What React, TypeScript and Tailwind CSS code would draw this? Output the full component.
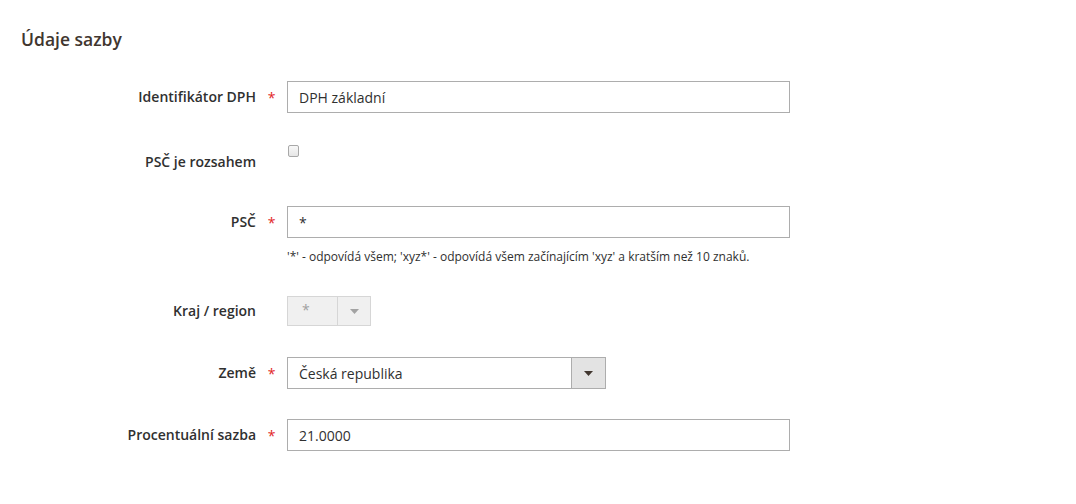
import React from "react";

const Caret = ({ color }: { color: string }) => (
  <svg width="9" height="5" viewBox="0 0 9 5" aria-hidden>
    <path d="M0 0 H9 L4.5 5 Z" fill={color} />
  </svg>
);

const Label = ({ text, required }: { text: string; required?: boolean }) => (
  <div className="flex w-[287px] shrink-0 items-center justify-end">
    <span className="text-[14px] font-semibold leading-5 text-[#303030]">{text}</span>
    <span className="w-[31px] pt-[2px] text-center text-[14px] leading-5 text-[#e22626]">{required ? "*" : ""}</span>
  </div>
);

const TextInput = ({ value }: { value: string }) => (
  <div className="flex h-[32px] w-[503px] items-center border border-[#adadad] bg-white pl-[11px] text-[14px] text-[#303030]">
    {value}
  </div>
);

export default function App() {
  return (
    <div className="min-h-[504px] w-[1076px] bg-white font-['Open_Sans',sans-serif] text-[#303030]">
      <div className="pl-[21px] pt-[27px]">
        <h2 className="text-[17.5px] font-semibold leading-6 text-[#41362f]">Údaje sazby</h2>
      </div>

      <div className="flex flex-col">
        <div className="mt-[30px] flex items-center">
          <Label text="Identifikátor DPH" required />
          <TextInput value="DPH základní" />
        </div>

        <div className="mt-[32px] flex items-start">
          <div className="pt-[7px]">
            <Label text="PSČ je rozsahem" />
          </div>
          <div className="ml-[1px] h-[12px] w-[11px] rounded-[2px] border border-[#a8a8a8] bg-gradient-to-b from-[#f8f8f8] to-[#e6e6e6]" />
        </div>

        <div className="mt-[34px] flex items-center">
          <Label text="PSČ" required />
          <TextInput value="*" />
        </div>
        <div className="mt-[11px] pl-[287px] text-[12px] leading-4 text-[#303030]">
          '*' - odpovídá všem; 'xyz*' - odpovídá všem začínajícím 'xyz' a kratším než 10 znaků.
        </div>

        <div className="mt-[31px] flex items-center">
          <Label text="Kraj / region" />
          <div className="flex h-[30px] w-[84px] border border-[#d6d6d6] bg-[#f0f0f0]">
            <div className="flex-1 pl-[14px] pt-[3px] text-[14px] leading-5 text-[#a0a0a0]">*</div>
            <div className="flex w-[33px] items-center justify-center border-l border-[#d6d6d6]">
              <Caret color="#a3a3a3" />
            </div>
          </div>
        </div>

        <div className="mt-[31px] flex items-center">
          <Label text="Země" required />
          <div className="flex h-[32px] w-[319px] border border-[#adadad] bg-white">
            <div className="flex flex-1 items-center pl-[11px] text-[14px] text-[#303030]">Česká republika</div>
            <div className="flex w-[34px] items-center justify-center border-l border-[#adadad] bg-[#e3e3e3]">
              <Caret color="#41362f" />
            </div>
          </div>
        </div>

        <div className="mt-[30px] flex items-center">
          <Label text="Procentuální sazba" required />
          <TextInput value="21.0000" />
        </div>
      </div>
    </div>
  );
}
